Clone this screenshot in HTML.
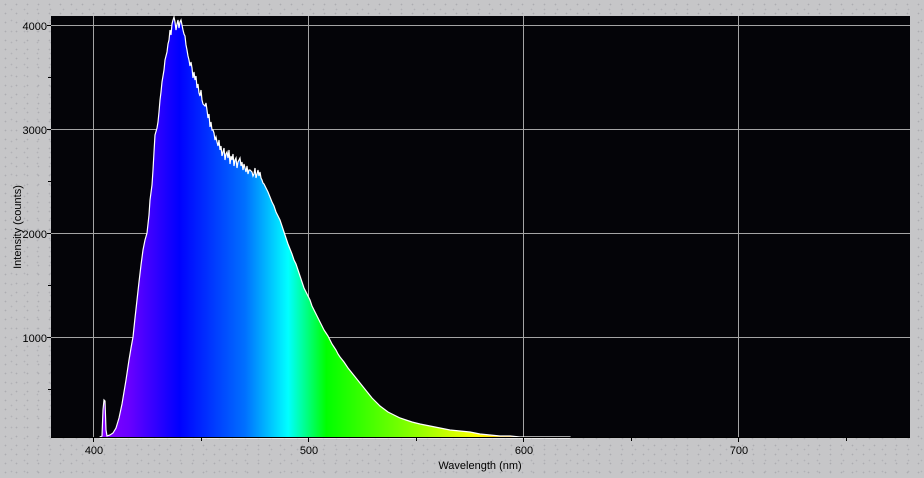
<!DOCTYPE html>
<html><head><meta charset="utf-8"><style>
html,body{margin:0;padding:0}
body{width:924px;height:478px;overflow:hidden;background-color:#c6c6c8;
background-image:radial-gradient(circle,#acacb0 0.7px,transparent 0.9px),radial-gradient(circle,#b2b2b6 0.7px,transparent 0.9px);
background-size:11px 9px,13px 11px;background-position:0 0,5px 4px;font-family:"Liberation Sans",sans-serif}
</style></head><body>
<svg width="924" height="478" style="position:absolute;left:0;top:0" xmlns="http://www.w3.org/2000/svg">
<defs>
<linearGradient id="g" gradientUnits="userSpaceOnUse" x1="93" y1="0" x2="600" y2="0">
<stop offset="0" stop-color="#9000ff"/>
<stop offset="0.07" stop-color="#6a00ff"/>
<stop offset="0.17" stop-color="#0000ff"/>
<stop offset="0.30" stop-color="#0070ff"/>
<stop offset="0.385" stop-color="#00ffff"/>
<stop offset="0.46" stop-color="#00ff00"/>
<stop offset="0.62" stop-color="#80ff00"/>
<stop offset="0.76" stop-color="#ffff00"/>
<stop offset="0.84" stop-color="#ffa000"/>
<stop offset="1" stop-color="#ff2000"/>
</linearGradient>
</defs>
<rect x="51" y="16" width="859" height="422" fill="#040408"/>
<g stroke="#a4a4a4" stroke-width="1">
<line x1="93.5" y1="16" x2="93.5" y2="437"/>
<line x1="308.5" y1="16" x2="308.5" y2="437"/>
<line x1="523.5" y1="16" x2="523.5" y2="437"/>
<line x1="738.5" y1="16" x2="738.5" y2="437"/>
<line x1="51" y1="25.5" x2="910" y2="25.5"/>
<line x1="51" y1="129.5" x2="910" y2="129.5"/>
<line x1="51" y1="233.5" x2="910" y2="233.5"/>
<line x1="51" y1="337.5" x2="910" y2="337.5"/>
</g>
<polygon fill="url(#g)" stroke="#fff" stroke-width="1.2" stroke-linejoin="miter" points="
100,437 102,436 103,410 104,400 105,401 106,430 107,436 110,435 113,433 116,428 119,418 122,404 124,392 126,380 129,360 131,348 133,337 135,318 137,300 139,282 141,265 143,250 145,240 147,233 149,215 150,200 152,185 153,170 154,152 155,135 157,128 158,122 159,112 160,100 161,92 162,82 164,70 165,60 167,52 168,44 169,40 170,30 171,35 172,24 173,20 174,17 175,22 176,30 177,24 178,20 179,28 180,22 181,20 182,25 183,30 184,34 185,36 186,45 187,50 188,56 189,60 190,66 191,62 192,68 193,78 194,72 195,80 196,76 197,88 198,84 199,93 200,96 201,90 202,100 203,104 205,106 206,103 207,110 208,118 209,114 210,127 211,122 212,130 213,130 214,133 215,140 216,137 217,142 218,146 219,140 220,150 221,146 222,156 223,152 224,148 225,160 226,154 227,152 228,158 229,150 230,164 231,156 232,160 233,154 234,166 235,160 236,158 237,168 238,162 239,160 240,158 241,166 242,162 243,170 244,164 245,168 246,172 247,166 248,174 249,170 250,170 252,172 253,176 254,174 255,168 256,178 257,174 258,170 259,176 260,172 261,178 262,180 263,183 264,184 266,188 268,192 270,197 272,202 274,206 276,212 278,216 280,220 282,226 284,232 286,238 288,244 290,249 292,254 294,260 296,264 298,270 300,276 302,282 304,288 306,292 308,296 310,300 312,306 314,310 316,314 318,318 320,322 322,326 324,330 326,333 328,336 330,340 332,344 334,347 336,350 338,354 340,357 344,362 348,368 352,373 356,378 360,383 364,388 368,393 372,398 376,402 380,406 384,409 388,412 392,414 396,416 400,418 406,420 412,422 420,424 430,426 440,428 450,430 460,431 470,432 480,434 490,435 500,436 510,436 520,437 540,437 570,437 570,438 100,438"/>
<line x1="51" y1="437.5" x2="910" y2="437.5" stroke="#000" stroke-width="1"/>
<g stroke="#000" stroke-width="1">
<line x1="93.5" y1="438" x2="93.5" y2="442"/>
<line x1="201.5" y1="438" x2="201.5" y2="441"/>
<line x1="308.5" y1="438" x2="308.5" y2="442"/>
<line x1="416.5" y1="438" x2="416.5" y2="441"/>
<line x1="523.5" y1="438" x2="523.5" y2="442"/>
<line x1="631.5" y1="438" x2="631.5" y2="441"/>
<line x1="738.5" y1="438" x2="738.5" y2="442"/>
<line x1="846.5" y1="438" x2="846.5" y2="441"/>
<line x1="47" y1="25.5" x2="51" y2="25.5"/>
<line x1="48" y1="77.5" x2="51" y2="77.5"/>
<line x1="47" y1="129.5" x2="51" y2="129.5"/>
<line x1="48" y1="181.5" x2="51" y2="181.5"/>
<line x1="47" y1="233.5" x2="51" y2="233.5"/>
<line x1="48" y1="285.5" x2="51" y2="285.5"/>
<line x1="47" y1="337.5" x2="51" y2="337.5"/>
<line x1="48" y1="389.5" x2="51" y2="389.5"/>
</g>
<g font-family="Liberation Sans, sans-serif" font-size="11" fill="#000">
<g text-anchor="end">
<text x="47" y="30">4000</text>
<text x="47" y="134">3000</text>
<text x="47" y="238">2000</text>
<text x="47" y="342">1000</text>
</g>
<g text-anchor="middle">
<text x="94" y="454">400</text>
<text x="309" y="454">500</text>
<text x="524" y="454">600</text>
<text x="739" y="454">700</text>
<text x="480" y="469">Wavelength (nm)</text>
<text transform="translate(21,227) rotate(-90)">Intensity (counts)</text>
</g>
</g>
</svg>
</body></html>
